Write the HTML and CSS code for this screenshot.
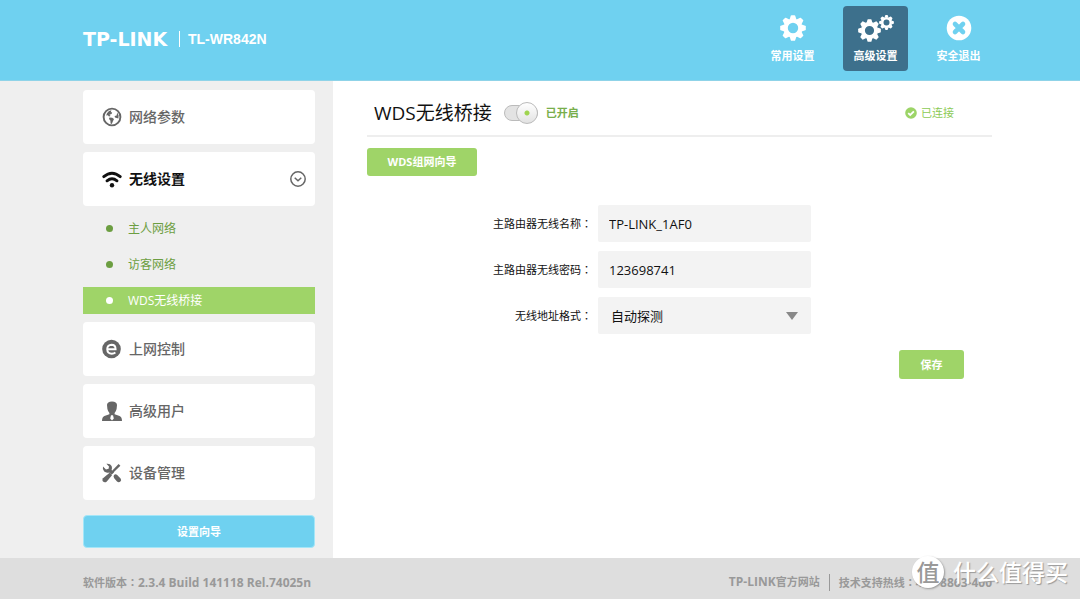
FILE: index.html
```html
<!DOCTYPE html>
<html lang="zh-CN">
<head>
<meta charset="utf-8">
<meta name="viewport" content="width=device-width, initial-scale=1">
<title>TL-WR842N</title>
<link rel="stylesheet" href="styles.css">
</head>
<body>
<svg class="defs" aria-hidden="true">
  <symbol id="gear" viewBox="-13 -13 26 26">
    <circle r="7.4" fill="none" stroke="currentColor" stroke-width="4.4"/>
    <g fill="currentColor">
      <path id="tooth" d="M-3.4-8.6-2.2-12.3Q-2-12.8-1.5-12.8H1.5Q2-12.8 2.2-12.3L3.4-8.6Z"/>
      <use href="#tooth" transform="rotate(45)"/>
      <use href="#tooth" transform="rotate(90)"/>
      <use href="#tooth" transform="rotate(135)"/>
      <use href="#tooth" transform="rotate(180)"/>
      <use href="#tooth" transform="rotate(225)"/>
      <use href="#tooth" transform="rotate(270)"/>
      <use href="#tooth" transform="rotate(315)"/>
    </g>
  </symbol>
</svg>

<header class="header">
  <div class="brand">
    <span class="brand-name">TP-LINK</span>
    <span class="brand-model">TL-WR842N</span>
  </div>
  <nav class="top-nav">
    <button class="top-btn" type="button">
      <svg class="top-icon" viewBox="0 0 36 32"><use href="#gear" x="5" y="3" width="26" height="26"/></svg>
      <span>常用设置</span>
    </button>
    <button class="top-btn active" type="button">
      <svg class="top-icon" viewBox="0 0 36 32"><use href="#gear" x="0" y="7" width="23" height="23"/><use href="#gear" x="21" y="3" width="15" height="15"/></svg>
      <span>高级设置</span>
    </button>
    <button class="top-btn" type="button">
      <svg class="top-icon" viewBox="0 0 36 32"><circle cx="18" cy="16" r="12.3" fill="#fff"/><path d="M14 12l8 8M22 12l-8 8" stroke="#6fd1f0" stroke-width="4.6" stroke-linecap="round"/></svg>
      <span>安全退出</span>
    </button>
  </nav>
</header>

<div class="body">
  <aside class="sidebar">
    <nav class="side-inner">
      <ul class="menu">
        <li><button class="card" type="button">
          <svg class="card-icon" viewBox="0 0 20 20"><circle cx="10" cy="10" r="8.4" fill="none" stroke="currentColor" stroke-width="1.9"/><path fill="currentColor" d="M9.4 3.2 7 4 5 6.2 4.2 8.6 5.8 8.2 7 9.6 8.6 9 7.4 7.8 9.6 7 10.2 5.2 8.8 5.2ZM7.4 10.4 10.2 10.8 12 12 11 14 9.8 17 8.6 16.6 8.4 13.6 7 12ZM15.2 5.6 16.6 8.6 16.4 11.6 14.6 11 13 10.6 12.6 9 14.6 8.4Z"/></svg>
          网络参数</button></li>
        <li><button class="card current" type="button" aria-expanded="true">
          <svg class="card-icon" viewBox="0 0 20 20"><g fill="none" stroke="currentColor" stroke-width="2.9" stroke-linecap="round"><path d="M1.8 7.6Q10 .8 18.2 7.6"/><path d="M5 11.8Q10 7.6 15 11.8"/></g><circle cx="10" cy="16.3" r="2.2" fill="currentColor"/></svg>
          无线设置
          <svg class="card-arrow" viewBox="0 0 16 16"><circle cx="8" cy="8" r="7.2"/><path d="M4.7 6.7 8 9.7l3.3-3"/></svg>
        </button>
          <ul class="submenu">
            <li><a href="#">主人网络</a></li>
            <li><a href="#">访客网络</a></li>
            <li><a class="selected" href="#">WDS无线桥接</a></li>
          </ul>
        </li>
        <li><button class="card" type="button">
          <svg class="card-icon" viewBox="0 0 20 20"><circle cx="9.5" cy="10" r="9.3" fill="currentColor"/><path d="M5.4 10.2H13.6Q13.6 5.7 9.6 5.7 5.2 5.9 5.2 10.2 5.4 14.7 9.8 14.7 12 14.7 13.4 13.6" fill="none" stroke="#fff" stroke-width="1.9"/></svg>
          上网控制</button></li>
        <li><button class="card" type="button">
          <svg class="card-icon" viewBox="0 0 20 20"><path fill="currentColor" d="M5 4Q5.2.4 10 .4T15 4L14.6 8Q14 10.6 12.6 12V13.2L17.6 15Q20 16 20 20H0Q0 16 2.4 15L7.4 13.2V12Q6 10.6 5.4 8Z"/><path fill="#fff" d="M9 14.2h2l.8 3.2-1.8 2.2-1.8-2.2Z"/></svg>
          高级用户</button></li>
        <li><button class="card" type="button">
          <svg class="card-icon" viewBox="0 0 20 20"><g fill="currentColor"><path d="M1 3.6 4 6.4 6.6 5.8 7 3.4 4.4.8Q8 .2 9.6 3 10.4 5 9.6 7L12 9.4 9.6 11.8 7.2 9.4Q4.4 10.4 2.2 8.6.2 6.6 1 3.6Z"/><path d="M16.6 1 18.4 2.8 11.2 9.8 9.6 8.2Z"/><path d="M7.6 9.8 10 12.2 4.8 18.4Q3 20 1 18.6-.2 17 1 15.2Z"/><path d="M12 12Q13.6 10.4 15.2 12L18.6 15.4Q19.8 17.2 18.4 18.6 16.8 19.8 15 18.6L12.2 15.2Q11 13.4 12 12Z"/></g></svg>
          设备管理</button></li>
      </ul>
      <button class="wizard" type="button">设置向导</button>
    </nav>
  </aside>

  <main class="main">
    <div class="title-row">
      <h1>WDS无线桥接</h1>
      <label class="toggle"><input type="checkbox" role="switch" checked><span>已开启</span></label>
      <span class="status"><svg viewBox="0 0 12 12"><circle cx="6" cy="6" r="5.8" fill="#9cd467"/><path d="M3.2 6.1 5.2 8 8.9 4.3" fill="none" stroke="#fff" stroke-width="1.8"/></svg>已连接</span>
    </div>
    <button class="btn guide" type="button">WDS组网向导</button>
    <form class="form">
      <label for="ssid">主路由器无线名称<span class="colon" lang="zh-Hant">：</span></label>
      <input class="field" id="ssid" type="text" value="TP-LINK_1AF0">
      <label for="pwd">主路由器无线密码<span class="colon" lang="zh-Hant">：</span></label>
      <input class="field" id="pwd" type="text" value="123698741">
      <label for="mode">无线地址格式<span class="colon" lang="zh-Hant">：</span></label>
      <div class="select-wrap"><select class="field" id="mode"><option>自动探测</option></select></div>
    </form>
    <div class="actions"><button class="btn save" type="button">保存</button></div>
  </main>
</div>

<footer class="footer">
  <span>软件版本<span class="colon" lang="zh-Hant">：</span><span class="latin">2.3.4 Build 141118 Rel.74025n</span></span>
  <div class="foot-links"><a href="#"><span class="latin">TP-LINK</span>官方网站</a><span>技术支持热线<span class="colon" lang="zh-Hant">：</span><span class="latin">400-8863-400</span></span></div>
  <div class="watermark"><span class="mark-disc">值</span><span>什么值得买</span></div>
</footer>
</body>
</html>
```

FILE: styles.css
```css
* { box-sizing: border-box; }

body {
  margin: 0;
  min-height: 100vh;
  display: flex;
  flex-direction: column;
  background: #fff;
  color: #111;
  font: 11px/16px "Open Sans", "Noto Sans CJK SC", sans-serif;
}

button, input, select { font: inherit; color: inherit; border: 0; margin: 0; }
button { cursor: pointer; padding: 0; }
a { color: inherit; text-decoration: none; }
ul { list-style: none; margin: 0; padding: 0; }
.defs { position: absolute; width: 0; height: 0; }
.colon { font-family: "Noto Sans CJK TC", sans-serif; }

/* header */
.header {
  display: flex;
  justify-content: space-between;
  padding: 6px calc(50% - 451px) 9px calc(50% - 457px);
  background: #6fd1f0;
  border-bottom: 1px solid #8fd3e8;
  color: #fff;
}
.brand { display: flex; align-items: center; height: 65px; }
.brand-name {
  font: bold 19px/16px "DejaVu Sans", sans-serif;
  width: 97px;
  border-right: 1px solid #fff;
}
.brand-model { padding-left: 8px; font: bold 14px/16px "Liberation Sans", sans-serif; }
.top-nav { display: flex; gap: 18px; }
.top-btn {
  display: flex;
  flex-direction: column;
  align-items: center;
  gap: 4px;
  width: 65px;
  height: 65px;
  padding-top: 6px;
  border-radius: 4px;
  background: none;
  font-weight: bold;
}
.top-btn.active { background: #3d708c; }
.top-icon { width: 36px; height: 32px; }

/* layout */
.body { flex: 1; display: grid; grid-template-columns: calc(50% - 207px) 1fr; }
.sidebar {
  display: flex;
  justify-content: flex-end;
  padding: 9px 18px 10px 0;
  background: #efefef;
}
.side-inner { width: 232px; }

/* side menu */
.menu { display: grid; gap: 8px; }
.card {
  display: flex;
  align-items: center;
  gap: 7px;
  width: 100%;
  height: 54px;
  padding: 0 9px 0 19px;
  border-radius: 4px;
  background: #fff;
  color: #666;
  font-size: 14px;
  font-weight: 500;
}
.card.current { color: #111; font-weight: bold; }
.card-icon { width: 20px; height: 20px; }
.card-arrow {
  width: 16px;
  height: 16px;
  margin-left: auto;
  fill: none;
  stroke: #666;
  stroke-width: 1.5;
}
.submenu { display: grid; gap: 9px; margin-top: 9px; }
.submenu a {
  display: flex;
  align-items: center;
  gap: 15px;
  height: 27px;
  padding-left: 23px;
  color: #6c9e41;
  font-size: 12px;
}
.submenu a::before {
  content: "";
  width: 7px;
  height: 7px;
  border-radius: 50%;
  background: currentColor;
}
.submenu .selected { background: #9fd468; color: #fff; }
.wizard {
  display: block;
  width: 100%;
  height: 33px;
  margin-top: 15px;
  border: 1px solid #a4e6f8;
  border-radius: 4px;
  background: #6fd1f0;
  color: #fff;
  font-weight: bold;
}

/* content */
.main { padding: 9px calc(50vw - 452px) 20px 34px; }
.title-row {
  display: flex;
  align-items: center;
  height: 47px;
  padding: 0 38px 0 7px;
  border-bottom: 2px solid #eee;
}
h1 { margin: 0; font-size: 19px; font-weight: normal; line-height: 24px; }
.toggle {
  display: flex;
  align-items: center;
  gap: 8px;
  margin-left: 12px;
  color: #78ae4b;
  font-weight: bold;
}
.toggle input {
  appearance: none;
  display: flex;
  align-items: center;
  justify-content: flex-end;
  width: 34px;
  height: 16px;
  border: 1px solid #bbb;
  border-radius: 8px;
  background: #e3e3e3;
}
.toggle input::before {
  content: "";
  flex: none;
  width: 20px;
  height: 20px;
  margin: 0 -1px;
  border: 1px solid #bbb;
  border-radius: 50%;
  background: radial-gradient(circle, #9fd44f 2px, transparent 3px), linear-gradient(#fff, #e2e2e2);
}
.toggle input:not(:checked) { justify-content: flex-start; }
.status { display: flex; align-items: center; gap: 4px; margin-left: auto; color: #8cca55; }
.status svg { width: 12px; height: 12px; }

.btn { border-radius: 3px; background: #9fd468; color: #fff; font-weight: bold; }
.guide { width: 110px; height: 28px; margin-top: 11px; }
.form {
  display: grid;
  grid-template-columns: 225px minmax(0, 213px);
  gap: 9px 6px;
  align-items: center;
  margin-top: 29px;
}
.form label { text-align: right; }
.field {
  width: 100%;
  height: 37px;
  padding: 0 11px;
  border-radius: 2px;
  background: #f3f3f3;
  font-size: 13px;
}
.select-wrap { position: relative; }
select.field { display: block; appearance: none; padding-left: 13px; }
.select-wrap::after {
  content: "";
  position: absolute;
  right: 13px;
  top: 15px;
  border: 6px solid transparent;
  border-top: 8px solid #888;
  border-bottom: 0;
  pointer-events: none;
}
.actions { display: flex; justify-content: flex-end; padding: 16px 28px 0 0; }
.save { width: 65px; height: 29px; }

/* footer */
.footer {
  position: relative;
  display: flex;
  justify-content: space-between;
  align-items: center;
  height: 41px;
  padding: 8px calc(50% - 452px) 0 calc(50% - 457px);
  background: #dedede;
  color: #999;
  font-weight: bold;
}
.latin { font-size: 12px; }
.foot-links { display: flex; }
.foot-links a { padding-right: 9px; margin-right: 9px; border-right: 1px solid #999; }
.watermark {
  position: absolute;
  right: 12px;
  bottom: 11px;
  display: flex;
  align-items: center;
  gap: 9px;
  color: #fff;
  font-size: 23px;
  font-weight: 500;
  line-height: 32px;
  text-shadow: 1px 1px 1px #999;
}
.mark-disc {
  width: 32px;
  height: 32px;
  border-radius: 50%;
  background: #fff;
  box-shadow: 1px 1px 2px #999;
  color: #999;
  text-align: center;
  text-shadow: none;
}
```
